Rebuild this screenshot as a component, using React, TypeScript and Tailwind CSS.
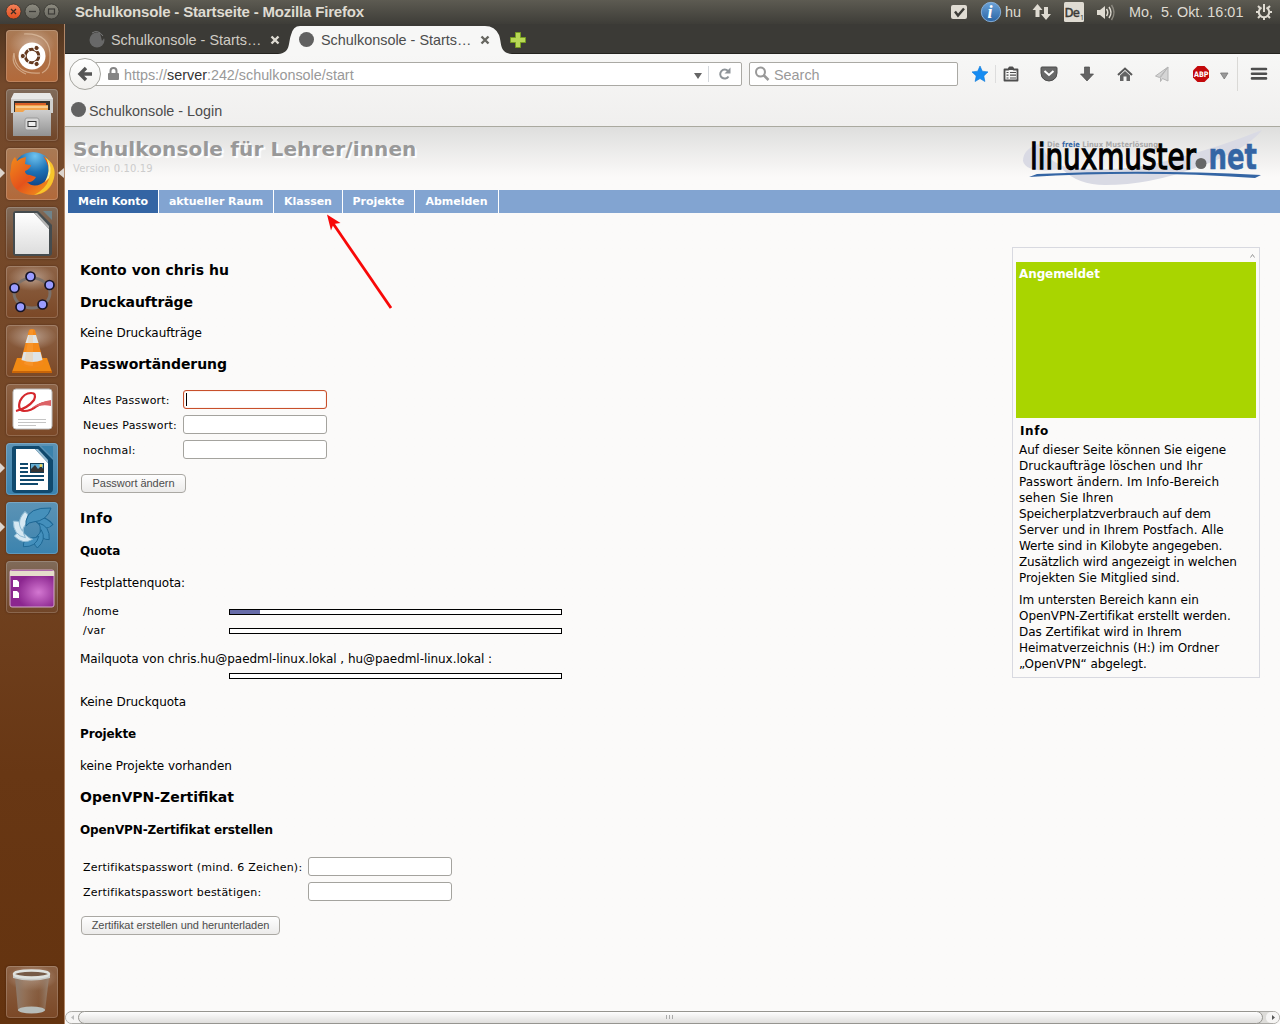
import React from "react";

const ui = "font-['Liberation_Sans',Arial,sans-serif]";

function TopBar() {
  return (
    <header className={`${ui} flex h-6 w-full shrink-0 items-center bg-linear-to-b from-[#5d5b52] to-[#3e3d38] text-[#dfdbd2]`}>
      <svg width="65" height="24" viewBox="0 0 65 24">
        <defs>
          <linearGradient id="close" x1="0" y1="0" x2="0" y2="1"><stop offset="0" stopColor="#f4825a" /><stop offset="1" stopColor="#e04e1e" /></linearGradient>
          <linearGradient id="wbtn" x1="0" y1="0" x2="0" y2="1"><stop offset="0" stopColor="#8d8b80" /><stop offset="1" stopColor="#6a6961" /></linearGradient>
        </defs>
        <circle cx="13.5" cy="11.5" r="7.5" fill="url(#close)" stroke="#35342f" strokeWidth=".8" />
        <path d="M11 9l5 5M16 9l-5 5" stroke="#3b2b22" strokeWidth="1.3" />
        <circle cx="32.5" cy="11.5" r="7.5" fill="url(#wbtn)" stroke="#35342f" strokeWidth=".8" />
        <path d="M29 11.5h7" stroke="#3c3b37" strokeWidth="1.3" />
        <circle cx="51.5" cy="11.5" r="7.5" fill="url(#wbtn)" stroke="#35342f" strokeWidth=".8" />
        <rect x="48.5" y="9" width="6" height="5" fill="none" stroke="#3c3b37" strokeWidth="1.2" />
      </svg>
      <span className="ml-[10px] text-[15px] leading-6 font-bold tracking-[-0.18px] whitespace-nowrap">Schulkonsole - Startseite - Mozilla Firefox</span>
      <div className="flex-1" />
      <svg width="54" height="24" viewBox="948 0 54 24">
        <defs><linearGradient id="inf" x1="0" y1="0" x2="0" y2="1"><stop offset="0" stopColor="#6ba2d8" /><stop offset="1" stopColor="#2b65a5" /></linearGradient></defs>
        <rect x="951" y="5" width="16" height="14" rx="2" fill="#dfdbd2" />
        <path d="M955 11.5l3 4 6-7" fill="none" stroke="#3c3b37" strokeWidth="2.4" />
        <circle cx="991" cy="12" r="9.7" fill="url(#inf)" stroke="#8cb6df" strokeWidth=".9" />
        <text x="987.5" y="18" fontFamily="Liberation Serif" fontStyle="italic" fontWeight="bold" fontSize="18" fill="#fff">i</text>
      </svg>
      <span className="ml-[3px] w-[20px] text-[14.5px] leading-6">hu</span>
      <svg className="ml-[7px]" width="88" height="24" viewBox="1032 0 88 24">
        <path d="M1037.5 4l-5 6h3v7h4v-7h3zM1046 20l-5-6h3V7h4v7h3z" fill="#dfdbd2" />
        <rect x="1064" y="2" width="20" height="20" rx="1.5" fill="#dfdbd2" />
        <text x="1064.5" y="17" fontFamily="Noto Sans" fontSize="12.500" fontWeight="500" fill="#3c3b37" stroke="#3c3b37" strokeWidth=".3" textLength="15.500">De</text>
        <text x="1080" y="20" fontFamily="Noto Sans" fontSize="7" fill="#3c3b37">1</text>
        <path d="M1097 10h3l5-4v13l-5-4h-3z" fill="#dfdbd2" />
        <path d="M1106.500 9q2.500 3.500 0 7M1109 7q4 5.500 0 11" fill="none" stroke="#dfdbd2" strokeWidth="1.500" />
        <path d="M1111.500 5q5 7.500 0 15" fill="none" stroke="#8a877e" strokeWidth="1.500" />
      </svg>
      <span className="ml-[9px] w-[116px] text-[14.4px] leading-6 whitespace-pre">Mo,  5. Okt. 16:01</span>
      <svg className="ml-[9px] mr-[6px]" width="20" height="24" viewBox="-10 -12 20 24">
        <g stroke="#dfdbd2" strokeWidth="2">
          <path d="M-5.500 0h-2.500M5.500 0h2.500M0 5.500v2.500M-4 -4l-2-2M4 -4l2-2M-4 4l-2 2M4 4l2 2M0 -8v8" />
          <path d="M-2.500 -4.500a5.200 5.200 0 1 0 5 0" fill="none" />
        </g>
      </svg>
    </header>
  );
}

const tileColors = {
  orange: "bg-linear-to-b from-[#a97a55] to-[#b2693a]",
  dark: "bg-linear-to-b from-[#8d6346] to-[#7b4826]",
  grey: "bg-linear-to-b from-[#806b5a] to-[#714527]",
  blue: "bg-linear-to-b from-[#5c93b5] to-[#3b83ae]",
};

function Tile({ color, children, left, right, last }: { color: keyof typeof tileColors; children: React.ReactNode; left?: boolean; right?: boolean; last?: boolean }) {
  return (
    <div className={`relative flex h-[52px] w-full shrink-0 justify-center pr-[1px] ${last ? "mt-auto mb-[6px]" : "mb-[7px]"}`}>
      {left && <svg className="absolute left-0 top-[20px]" width="5" height="10"><path d="M0 0l5 5-5 5z" fill="#ddd5ce" /></svg>}
      {right && <svg className="absolute right-0 top-[20px]" width="6" height="10"><path d="M6 0L0 5l6 5z" fill="#ddd5ce" /></svg>}
      <div className={`h-[52px] w-[52px] rounded-[4px] shadow-[inset_0_0_0_1px_rgba(255,255,255,.18),0_0_2px_rgba(40,10,0,.5)] ${tileColors[color]}`}>
        <svg width="52" height="52" viewBox="0 0 52 52">{children}</svg>
      </div>
    </div>
  );
}

function Launcher() {
  const blades = [1.15, 1.05, 1, 1, 1, 1.1, 1.05];
  return (
    <aside className="flex w-[65px] shrink-0 flex-col border-r border-[#b18768] bg-[linear-gradient(to_bottom,#50351f_0,#74492b_60px,#754726_450px,#683714_750px,#64330f_100%)] pt-[6px]">
      <Tile color="orange">
        <defs><radialGradient id="sheen"><stop offset="0" stopColor="#fff" stopOpacity=".4" /><stop offset="1" stopColor="#fff" stopOpacity="0" /></radialGradient></defs>
        <ellipse cx="26" cy="15" rx="23" ry="17" fill="url(#sheen)" />
        <path d="M18 4Q46 3 44 29M8 23Q9 45 34 43M20 44Q4 37 8 23M44 29Q44 39 36 43" fill="none" stroke="#e8cdb3" strokeOpacity=".6" strokeWidth="1.200" />
        <circle cx="26" cy="26" r="13.500" fill="#fff" />
        <circle cx="26" cy="26" r="6.800" fill="none" stroke="#653a20" strokeWidth="3" />
        {[60, 180, 300].map(a => <g key={a} transform={`rotate(${a} 26 26)`}><circle cx="35.200" cy="26" r="2.600" fill="#653a20" stroke="#fff" strokeWidth="1" /></g>)}
        {[0, 120, 240].map(a => <path key={a} transform={`rotate(${a} 26 26)`} d="M31 26h5" stroke="#fff" strokeWidth="1" />)}
      </Tile>
      <Tile color="grey">
        <defs><linearGradient id="drawer" x1="0" y1="0" x2="0" y2="1"><stop stopColor="#cfcfcf" /><stop offset="1" stopColor="#929292" /></linearGradient></defs>
        <path d="M5 10l3-6h36l3 6v14H5z" fill="#d0d0ce" /><path d="M5 10l3-6h36l3 6z" fill="#e8e8e6" />
        <rect x="8" y="12" width="36" height="12" fill="#37322e" />
        <path d="M9 14h31v8H9z" fill="#d95f27" /><path d="M9 16h33v7H9z" fill="#f2a44d" /><path d="M10 18h32" stroke="#fff1cf" />
        <path d="M7 23h10l2-2h26v26H7z" fill="url(#drawer)" />
        <rect x="19" y="29" width="14" height="12" rx="2" fill="#d7d7d7" stroke="#999" /><rect x="22" y="32.500" width="8" height="5" fill="#eee" stroke="#333" />
      </Tile>
      <Tile color="orange" left right>
        <defs>
          <radialGradient id="globe" cx=".55" cy=".1" r=".8"><stop stopColor="#6fc3ef" /><stop offset=".5" stopColor="#1c71b5" /><stop offset="1" stopColor="#0e3f80" /></radialGradient>
          <linearGradient id="fox" x1="0" y1="0" x2="1" y2="1"><stop stopColor="#f28c1b" /><stop offset=".5" stopColor="#e4521b" /><stop offset="1" stopColor="#f5a61d" /></linearGradient>
        </defs>
        <circle cx="27" cy="24" r="20" fill="url(#globe)" />
        <path d="M5 20Q5 13 9 9l2 4q3-3 9-4l-1 7q3 1 6 1-1 4-6 6 0 4 5 4l6 2q-3 6-9 5 6 6 14 2 8-4 8-14-1-7-6-14 12 6 11 20-2 18-21 19Q5 46 4 26z" fill="url(#fox)" />
        <path d="M39 9Q51 17 48 30 44 45 28 47q12-6 15-16 3-12-4-22z" fill="#f7c52c" /><path d="M41 11q4 12-2 23l4-4q4-10-2-19z" fill="#fff19b" />
      </Tile>
      <Tile color="grey">
        <path d="M37 4h9v9z" fill="#70838a" /><path d="M7 7q0-3 3-3h22l14 14v28q0 3-3 3H10q-3 0-3-3z" fill="#454c4f" />
        <defs><linearGradient id="paper" x1="0" y1="0" x2="0" y2="1"><stop stopColor="#fff" /><stop offset="1" stopColor="#dddddd" /></linearGradient></defs>
        <path d="M9 6h19l15 16v25H9z" fill="url(#paper)" /><path d="M28 6l15 16V19L31 6z" fill="#b5b5b5" />
      </Tile>
      <Tile color="dark">
        <ellipse cx="26" cy="12" rx="24" ry="13" fill="url(#sheen)" />
        <ellipse cx="26" cy="27" rx="18" ry="15" fill="none" stroke="#7b716b" strokeWidth="3" />
        {[[24.500, 10.500], [43.500, 19], [36.500, 38.500], [14.500, 41], [8.500, 22]].map(([x, y]) => <circle key={x} cx={x} cy={y} r="4.500" fill="#9a9cff" stroke="#151326" strokeWidth="1.700" />)}
      </Tile>
      <Tile color="dark">
        <ellipse cx="26" cy="12" rx="25" ry="13" fill="url(#sheen)" />
        <path d="M11 33h30l5 14H6z" fill="#f28a13" /><path d="M6 46h40v2H6z" fill="#c96508" />
        <path d="M23 5q3-2 6 0l9 34q-12 8-24 0z" fill="#f48919" />
        <path d="M22 10h8l2.500 8h-13zM17.500 27h17l2 8q-10 4-21 0z" fill="#dee4e8" />
        <path d="M24 5q2-1 3 0v36q-5 0-9-2z" fill="#ffb55c" fillOpacity=".25" />
      </Tile>
      <Tile color="dark">
        <rect x="7" y="5" width="39" height="40" rx="3" fill="#fff" stroke="#bbb" />
        <path d="M10 27Q22 24 28 16 31 9 25 9 18 9 14 17 11 26 18 27 25 27 31 22 37 18 45 18" fill="none" stroke="#d5282d" strokeWidth="2.200" />
        <path d="M25 24q11-7 20-8v6q-9-2-20 2z" fill="#dc6367" /><path d="M12 35.500h28M12 38.500h28M12 41.500h18" stroke="#c5c5c5" />
      </Tile>
      <Tile color="blue" left>
        <path d="M35 3h12v12z" fill="#3b82ab" /><path d="M6 6q0-3 3-3h24l14 14v29q0 4-4 4H10q-4 0-4-4z" fill="#10496d" />
        <path d="M10 6h19l13 14v27H10z" fill="#fff" /><path d="M29 6l13 14V17L32 6z" fill="#9bbfd4" />
        <path d="M14 21h8M14 25h8M14 29h8M14 33h24M14 37h24M14 41h18" stroke="#10496d" strokeWidth="2" />
        <rect x="24.500" y="20.500" width="13" height="9" fill="#63acd2" stroke="#123e57" /><path d="M25 29v-3l4-4 3 4 3-3 3 4v2z" fill="#333" /><circle cx="35" cy="22.500" r="1.500" fill="#efd353" />
      </Tile>
      <Tile color="blue" left>
        {blades.map((s, i) => (
          <g key={i} transform={`translate(26 28) rotate(${50 + i * 44}) scale(${s})`}>
            <path d="M-7 -6Q-5 -17 8 -17 9 -9 1 -8 -4 -8 -7 -6z" fill={i > 3 ? "#d5e8f3" : "#438fbc"} stroke={i > 3 ? "#8db9d2" : "#1d6693"} strokeWidth=".9" />
          </g>
        ))}
        <path d="M20 19Q22 5 45 6 41 19 27 20 23 20 20 24z" fill="#4590bb" stroke="#1d6693" />
      </Tile>
      <Tile color="grey">
        <defs><radialGradient id="desk" cx=".65" cy=".6"><stop stopColor="#d377d1" /><stop offset="1" stopColor="#8b268f" /></radialGradient></defs>
        <rect x="4" y="9" width="44" height="37" rx="2" fill="url(#desk)" stroke="#d4abc9" /><path d="M4 10h44v5H4z" fill="#e5ddcb" />
        <path d="M7 19h4l2 2v5H7zM7 30h4l2 2v5H7z" fill="#fff" />
      </Tile>
      <Tile color="dark" last>
        <ellipse cx="26" cy="12" rx="25" ry="13" fill="url(#sheen)" />
        <defs><linearGradient id="bin"><stop stopColor="#8c7a6c" /><stop offset=".3" stopColor="#9b806a" stopOpacity=".6" /><stop offset=".7" stopColor="#8b6a50" stopOpacity=".3" /><stop offset="1" stopColor="#988474" /></linearGradient></defs>
        <path d="M9 11l3 34h27l4-34z" fill="url(#bin)" /><ellipse cx="25.500" cy="44" rx="13.500" ry="3.500" fill="#b7bcb9" />
        <path d="M7 8v4q18 5 37 0V8z" fill="#c7c9c6" /><ellipse cx="25.500" cy="8" rx="17.500" ry="3.500" fill="#765b47" stroke="#dfe2df" strokeWidth="2.500" />
      </Tile>
    </aside>
  );
}

function Tabs() {
  return (
    <div className={`${ui} relative h-[30px] shrink-0 bg-[#3b3a36]`}>
      <svg className="absolute inset-0" width="1215" height="30" viewBox="65 24 1215 30">
        <path d="M65 53.500H1280" stroke="#24231f" />
        <path d="M278 54C291 53 288 43 291 35Q293 26 300 26H485Q495 26 499 35C502 43 499 53 512 54z" fill="#f7f7f6" />
        <circle cx="97" cy="40" r="7.500" fill="#686868" /><path d="M100 33l5 4-3 4z" fill="#3b3a36" /><path d="M92 33q6-4 11 3" stroke="#777" fill="none" />
        <circle cx="306.500" cy="39.500" r="7.500" fill="#606060" />
        <path d="M271.500 36.500l7 7M278.500 36.500l-7 7" stroke="#dedbd3" strokeWidth="2.400" />
        <path d="M481.500 36.500l7 7M488.500 36.500l-7 7" stroke="#666660" strokeWidth="2.400" />
        <path d="M515.500 32.500h5v5h5v5h-5v5h-5v-5h-5v-5h5z" fill="#b8d856" stroke="#769c21" />
      </svg>
      <div className="relative flex text-[14.4px] leading-[32px] whitespace-nowrap">
        <span className="ml-[46px] w-[210px] text-[#d0ccc4]">Schulkonsole - Starts…</span>
        <span className="text-[#4c4c4c]">Schulkonsole - Starts…</span>
      </div>
    </div>
  );
}

function Toolbar() {
  return (
    <div className={`${ui} h-[73px] shrink-0 border-b border-[#aaa99f] bg-linear-to-b from-[#f7f7f6] to-[#f0efee]`}>
      <div className="flex h-10 items-center">
        <div className="z-10 ml-[4px] flex h-8 w-8 items-center justify-center rounded-full border border-[#a5a59f] bg-linear-to-b from-white to-[#f1f0ee]">
          <svg width="18" height="18" viewBox="0 0 18 18"><path d="M10 3L4 9l6 6M4 9h12" fill="none" stroke="#555" strokeWidth="3.400" /></svg>
        </div>
        <div className="-ml-[6px] flex h-6 w-[647px] items-center rounded-r-[2px] border border-[#aaa9a4] bg-white">
          <svg className="ml-[12px]" width="11" height="14" viewBox="0 0 11 14"><rect y="6" width="11" height="7" rx="1" fill="#858585" /><path d="M2.500 7V4a3 3 0 0 1 6 0v3" fill="none" stroke="#858585" strokeWidth="2" /></svg>
          <span className="ml-[5px] flex-1 pt-[2px] text-[14.35px] leading-[20px] text-[#999]">https://<span className="text-[#333]">server</span>:242/schulkonsole/start</span>
          <svg width="50" height="22" viewBox="690 63 50 22">
            <path d="M693 73h8l-4 6z" fill="#666" /><path d="M707.500 66v16" stroke="#d4d8dc" />
            <path d="M727 71a4.500 4.500 0 1 0 .5 5.500" fill="none" stroke="#8e9499" strokeWidth="2" /><path d="M723.500 73.500h6v-6z" fill="#8e9499" />
          </svg>
        </div>
        <div className="ml-[7px] flex h-6 w-[209px] items-center rounded-[2px] border border-[#aaa9a4] bg-white">
          <svg className="ml-[5px]" width="15" height="16" viewBox="0 0 15 16"><circle cx="5.500" cy="6" r="4.500" fill="none" stroke="#999" strokeWidth="2" /><path d="M8.500 9l5 5" stroke="#999" strokeWidth="2.500" /></svg>
          <span className="ml-[4px] pt-[2px] text-[14.4px] leading-[20px] text-[#999]">Search</span>
        </div>
        <svg width="322" height="40" viewBox="958 54 322 40">
          <path d="M980 66l2.300 5.200 5.700.7-4.200 4 1.100 5.600-4.900-2.900-4.900 2.900 1.100-5.600-4.200-4 5.700-.7z" fill="#168cf2" stroke="#0977d8" strokeWidth=".6" />
          <path d="M995.500 65v18" stroke="#ddd" />
          <path d="M1004.500 69.500h4l1-2h3l1 2h4V80.500h-13z" fill="#f5f5f4" stroke="#4e4e4e" strokeWidth="1.800" strokeLinejoin="round" /><path d="M1008 70h6v-2h-6z" fill="#4e4e4e" />
          <path d="M1006.500 72.500h2M1010 72.500h6M1006.500 75.200h2M1010 75.200h6M1006.500 78h2M1010 78h6" stroke="#4e4e4e" strokeWidth="1.200" />
          <path d="M1042 67h14q1 0 1 1v5q0 5-4 7-4 2-8 0-4-2-4-7v-5q0-1 1-1z" fill="#686868" stroke="#4c4c4c" /><path d="M1044.500 71l4.500 4 4.500-4" fill="none" stroke="#fff" strokeWidth="2" />
          <path d="M1084.500 67h5v7h4l-6.500 7-6.500-7h4z" fill="#646464" stroke="#4c4c4c" strokeWidth=".7" />
          <path d="M1118 75l7-6.500 7 6.500" fill="none" stroke="#585858" strokeWidth="2" /><path d="M1120 75.500l5-4.500 5 4.500v5.500h-3.500v-4.500h-3V81H1120z" fill="#646464" />
          <path d="M1168 67l-12.500 9 4 1.500zM1168 67l-7.500 10.500v4l2-3 5.500 2.500z" fill="#d5d5d5" stroke="#b4b4b4" />
          <path d="M1197.500 66h7l4.500 4.500v7l-4.500 4.500h-7l-4.500-4.500v-7z" fill="#c3090b" />
          <text x="1194" y="77" fontFamily="DejaVu Sans" fontSize="7.500" fontWeight="bold" textLength="14.500" lengthAdjust="spacingAndGlyphs" fill="#fff">ABP</text>
          <path d="M1220.500 73h7.500l-3.750 6z" fill="#999" stroke="#777" strokeWidth=".8" /><path d="M1237.500 57v34" stroke="#dad9d6" />
          <path d="M1252 69h14M1252 73.700h14M1252 78.400h14" stroke="#4e4e4e" strokeWidth="2.600" strokeLinecap="round" />
        </svg>
      </div>
      <div className="flex h-8 items-center text-[14.35px] text-[#4c4c4c]">
        <span className="mr-[3px] mb-px ml-[6px] h-[15px] w-[15px] rounded-full bg-[#626262]" />
        <span className="pt-[2px] leading-[20px]">Schulkonsole - Login</span>
      </div>
    </div>
  );
}

function Logo() {
  return (
    <svg width="242" height="58" viewBox="1021 130 242 58">
      <path d="M1045 142Q1023 147 1023 161 1026 174 1062 169 1078 185 1105 185 1150 185 1198 167 1245 151 1262 130 1220 147 1170 160 1120 174 1066 167 1040 158 1045 142z" fill="#d9dae4" />
      <text x="1047" y="147" fontFamily="DejaVu Sans Condensed, DejaVu Sans" fontSize="7.500" fontWeight="bold" textLength="111" fill="#aaa">Die <tspan fill="#3465a4">freie</tspan> Linux Musterlösung</text>
      <text x="1030" y="169" fontFamily="DejaVu Sans" fontSize="36" textLength="166" lengthAdjust="spacingAndGlyphs" fill="#000" stroke="#000" strokeWidth="1.300">linuxmuster</text>
      <circle cx="1201" cy="163.500" r="5.500" fill="#666" />
      <text transform="translate(1208.500 169) scale(.72 1)" fontFamily="DejaVu Sans" fontSize="36" fontWeight="bold" fill="#3465a4" stroke="#3465a4" strokeWidth=".6">net</text>
      <path d="M1029 177l8-3q110-5 224 1l-6 3q-110-8-226-1z" fill="#3465a4" />
    </svg>
  );
}

const H2 = ({ className, children }: { className: string; children: string }) => <h2 className={`${className} flex items-center text-[14px] font-bold`}>{children}</h2>;
const H3 = ({ className, children }: { className: string; children: string }) => <h3 className={`${className} flex items-center text-[12px] font-bold tracking-[-0.13px]`}>{children}</h3>;
const P = ({ className, children }: { className: string; children: string }) => <p className={`${className} flex items-center text-[12px] tracking-[-0.05px]`}>{children}</p>;

function Field({ label, width, focused }: { label: string; width: string; focused?: boolean }) {
  return (
    <label className="flex h-[25px] items-center pl-[3px] text-[11px]">
      <span className={`${width} shrink-0 pt-[3px] tracking-[0.22px] whitespace-nowrap`}>{label}</span>
      <span className={`flex h-[19px] w-[144px] items-center rounded-[3px] border bg-white pl-[2px] ${focused ? "border-[#c8502c] shadow-[inset_0_0_1px_#e0825f]" : "border-[#a4a39e]"}`}>
        {focused && <span className="h-[13px] w-px bg-black" />}
      </span>
    </label>
  );
}

function Button({ className, children }: { className: string; children: string }) {
  return <button className={`${className} ${ui} ml-px block h-[19px] rounded-[4px] border border-[#aaa8a3] bg-linear-to-b from-[#fefefe] to-[#ecebea] pb-px text-[11px] leading-[16px] tracking-[-0.04px] whitespace-nowrap text-[#4c4c4c]`}>{children}</button>;
}

function Quota({ label, className, used = 0 }: { label?: string; className: string; used?: number }) {
  return (
    <div className={`${className} flex items-center text-[11px]`}>
      <span className="w-[149px] pt-[2px] pl-[3px] tracking-[0.2px]">{label}</span>
      <span className="h-[6px] w-[333px] border border-black bg-white"><span className="block h-full bg-[#666ba8]" style={{ width: used }} /></span>
    </div>
  );
}

function Content() {
  return (
    <div className="w-[600px] pl-[15px] pt-[41px] text-black">
      <H2 className="h-8 tracking-[0.05px]">Konto von chris hu</H2>
      <H2 className="h-8 tracking-[-0.1px]">Druckaufträge</H2>
      <P className="h-[30px]">Keine Druckaufträge</P>
      <H2 className="h-8 tracking-[-0.06px]">Passwortänderung</H2>
      <div className="mt-[7px]">
        <Field label="Altes Passwort:" width="w-[100px]" focused />
        <Field label="Neues Passwort:" width="w-[100px]" />
        <Field label="nochmal:" width="w-[100px]" />
      </div>
      <Button className="mt-3 w-[105px]">Passwort ändern</Button>
      <H2 className="mt-[9px] h-8 tracking-[0.5px]">Info</H2>
      <H3 className="mt-px h-8">Quota</H3>
      <P className="h-8">Festplattenquota:</P>
      <Quota className="mt-[3px] h-[19px]" label="/home" used={30} />
      <Quota className="h-[19px]" label="/var" />
      <P className="mt-[7px] h-6">Mailquota von chris.hu@paedml-linux.lokal , hu@paedml-linux.lokal :</P>
      <Quota className="h-[10px]" />
      <P className="mt-[5px] h-8">Keine Druckquota</P>
      <H3 className="h-8">Projekte</H3>
      <P className="h-[31px]">keine Projekte vorhanden</P>
      <H2 className="h-8">OpenVPN-Zertifikat</H2>
      <H3 className="mt-px h-8">OpenVPN-Zertifikat erstellen</H3>
      <div className="mt-2">
        <Field label="Zertifikatspasswort (mind. 6 Zeichen):" width="w-[225px]" />
        <Field label="Zertifikatspasswort bestätigen:" width="w-[225px]" />
      </div>
      <Button className="mt-3 w-[199px]">Zertifikat erstellen und herunterladen</Button>
    </div>
  );
}

const info1 = ["Auf dieser Seite können Sie eigene", "Druckaufträge löschen und Ihr", "Passwort ändern. Im Info-Bereich", "sehen Sie Ihren", "Speicherplatzverbrauch auf dem", "Server und in Ihrem Postfach. Alle", "Werte sind in Kilobyte angegeben.", "Zusätzlich wird angezeigt in welchen", "Projekten Sie Mitglied sind."];
const info2 = ["Im untersten Bereich kann ein", "OpenVPN-Zertifikat erstellt werden.", "Das Zertifikat wird in Ihrem", "Heimatverzeichnis (H:) im Ordner", "„OpenVPN“ abgelegt."];
// Per-line letter spacing of the first paragraph.
const tracks = ["tracking-[-0.07px]", "tracking-[0.03px]", "tracking-[0.06px]", "tracking-[0.1px]", "tracking-[-0.15px]", "tracking-[0.02px]", "tracking-[-0.1px]", "tracking-[-0.12px]", "tracking-[-0.06px]"];

function InfoBox() {
  return (
    <aside className="mt-[34px] mr-[20px] h-[431px] w-[248px] border border-[#d8d9e0] px-[3px] text-[12px] leading-4 whitespace-nowrap">
      <div className="flex h-[14px] justify-end pt-[5px]"><svg width="7" height="6"><path d="M1.500 4.500l2-3 2 3" fill="none" stroke="#999" /></svg></div>
      <div className="h-[156px] bg-[#a9d500] px-[3px] pt-1 font-bold tracking-[-0.1px] text-white">Angemeldet</div>
      <h3 className="mt-[5px] pl-1 font-bold tracking-[0.6px]">Info</h3>
      <p className="mt-[3px] pl-[3px]">{info1.map((l, i) => <span key={l} className={`block ${tracks[i]}`}>{l}</span>)}</p>
      <p className="mt-[6px] pl-[3px] tracking-[-0.06px]">{info2.map(l => <span key={l} className="block">{l}</span>)}</p>
    </aside>
  );
}

function ScrollBar() {
  return (
    <svg className="shrink-0" width="1215" height="13" viewBox="65 1011 1215 13">
      <defs><linearGradient id="sb" x1="0" y1="0" x2="0" y2="1"><stop stopColor="#fff" /><stop offset="1" stopColor="#dedddb" /></linearGradient></defs>
      <rect x="65.500" y="1011.500" width="1214" height="12" rx="6" fill="#dddcd9" stroke="#aaa9a5" />
      <rect x="66" y="1012" width="30" height="11" rx="6" fill="#f6f5f4" /><rect x="1266" y="1012" width="13" height="11" rx="5" fill="#f6f5f4" />
      <rect x="78.500" y="1011.500" width="1184" height="12" rx="6" fill="url(#sb)" stroke="#969590" />
      <path d="M74 1015v5l-3-2.500z" fill="#bbb" /><path d="M1272 1015v5l3-2.500z" fill="#555" />
      <path d="M666.500 1015v4M669.500 1015v4M672.500 1015v4" stroke="#aaa" />
    </svg>
  );
}

export default function App() {
  const nav = [["Mein Konto", "w-[91px] bg-[#3465a4]"], ["aktueller Raum", "w-[115px]"], ["Klassen", "w-[69px]"], ["Projekte", "w-[72px]"], ["Abmelden", "w-[84px]"]];
  return (
    <div className="relative flex h-[1024px] w-[1280px] flex-col overflow-hidden bg-[#fbfaf9]">
      <TopBar />
      <div className="flex min-h-0 flex-1">
        <Launcher />
        <main className="flex min-w-0 flex-1 flex-col">
          <Tabs />
          <Toolbar />
          <section className="flex min-h-0 flex-1 flex-col bg-linear-to-b from-[#dededd] to-[#fbfaf9] to-[50px] font-['DejaVu_Sans',sans-serif]">
            <div className="flex h-[63px] shrink-0 justify-between pl-2">
              <div>
                <h1 className="mt-[10px] text-[20px] leading-6 font-bold tracking-[0.14px] whitespace-nowrap text-[#999] [text-shadow:2px_2px_1px_#fff]">Schulkonsole für Lehrer/innen</h1>
                <p className="text-[10px] leading-[15px] tracking-[0.1px] text-[#ccc]">Version 0.10.19</p>
              </div>
              <div className="mt-[3px] mr-[17px]"><Logo /></div>
            </div>
            <nav className="ml-[3px] flex h-[23px] shrink-0 bg-[#82a4d1] text-[11px] leading-[23px] font-bold tracking-[-0.04px] text-white">
              {nav.map(([n, c]) => <a key={n} className={`${c} shrink-0 border-r border-white text-center whitespace-nowrap`}>{n}</a>)}
            </nav>
            <div className="flex min-h-0 flex-1 justify-between"><Content /><InfoBox /></div>
          </section>
          <ScrollBar />
        </main>
      </div>
      <svg className="pointer-events-none absolute top-[210px] left-[320px]" width="80" height="105" viewBox="320 210 80 105">
        <path d="M391 308L332 222" stroke="#f80808" strokeWidth="2.800" /><path d="M327 214.500l13.500 8.500-7 1-2.500 6.500z" fill="#f80808" />
      </svg>
    </div>
  );
}
